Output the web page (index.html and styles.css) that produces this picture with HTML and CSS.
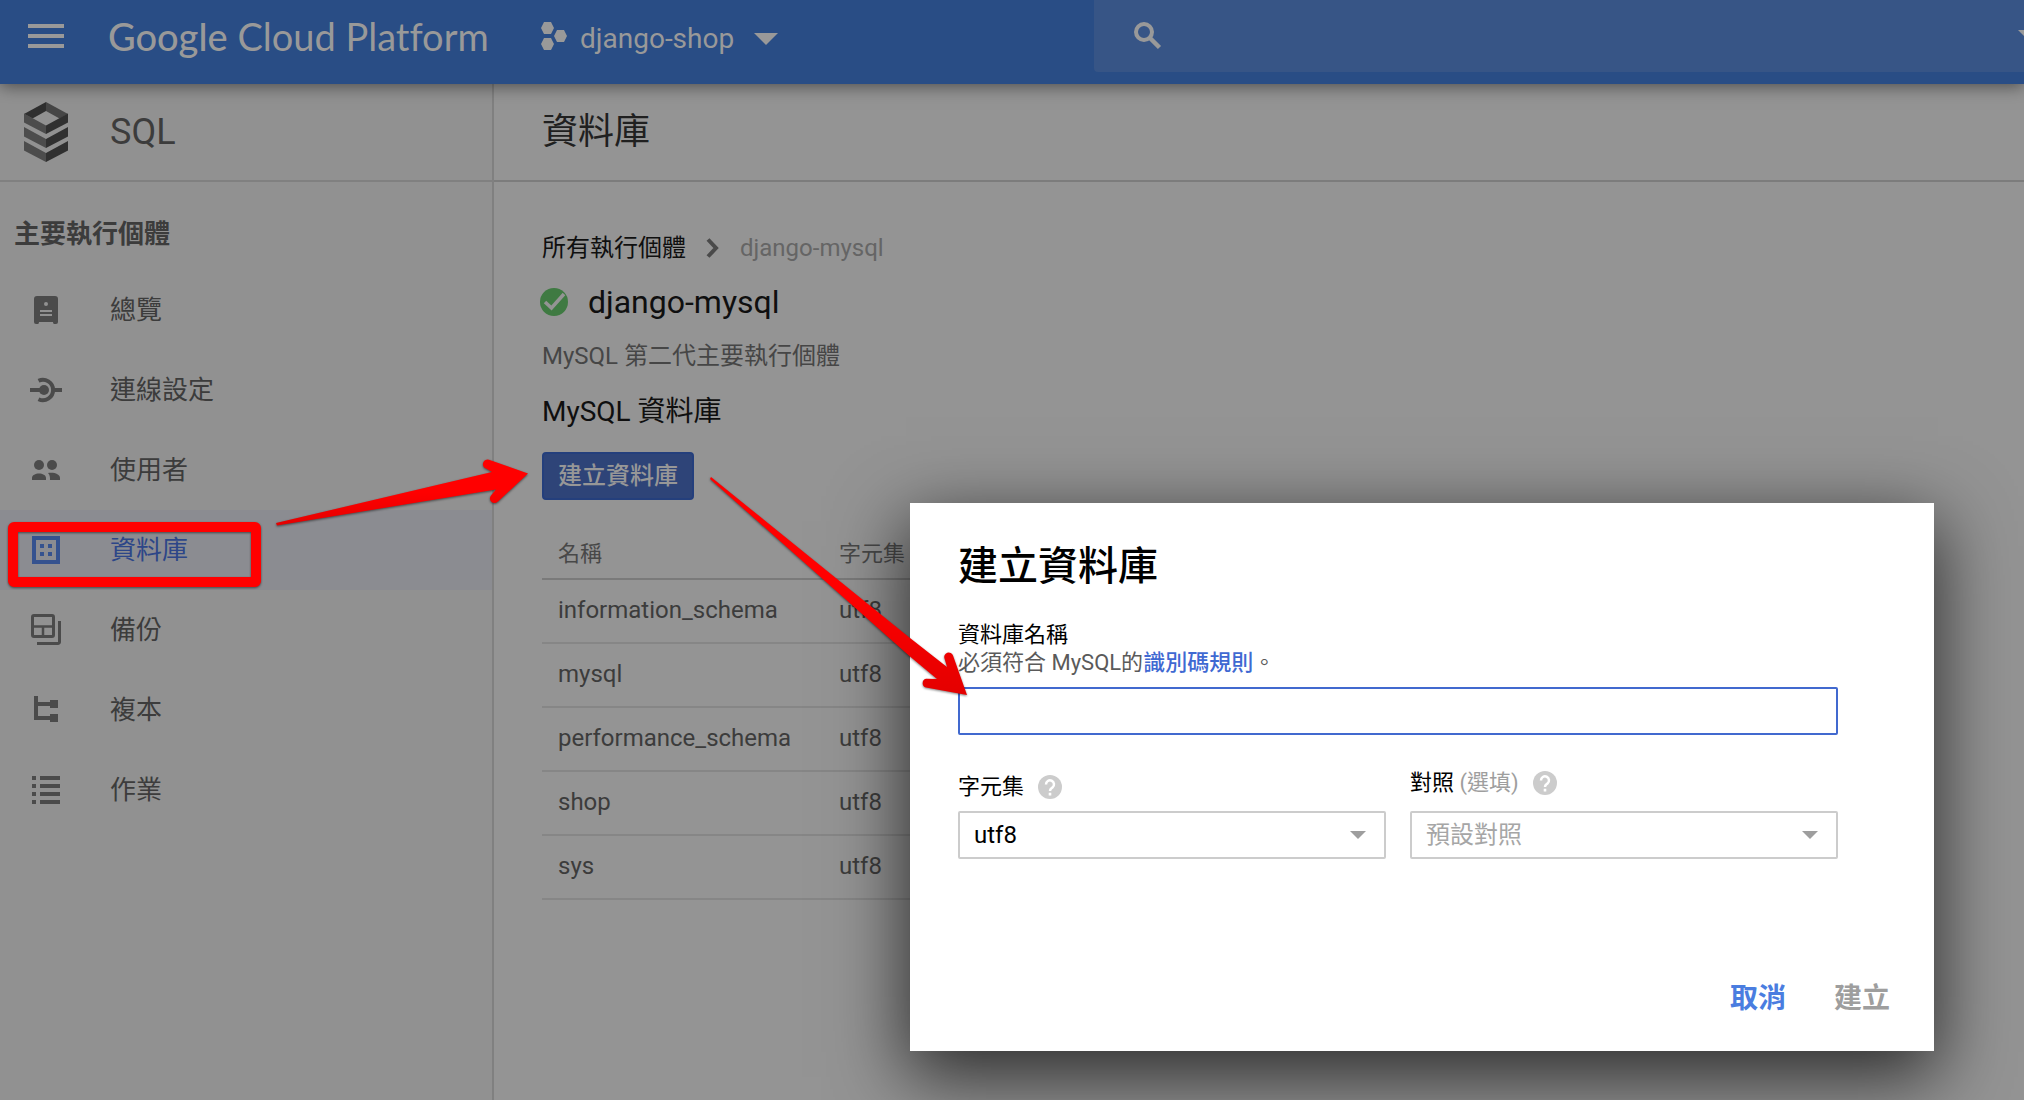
FILE: index.html
```html
<!DOCTYPE html>
<html lang="zh-Hant">
<head>
<meta charset="utf-8">
<meta name="viewport" content="width=device-width, initial-scale=1">
<title>資料庫 - SQL - Google Cloud Platform</title>
<link rel="stylesheet" href="styles.css">
</head>
<body>
<div class="page">
  <header class="topbar">
    <button class="icon-button menu-button" type="button" aria-label="選單">
      <svg width="36" height="24" viewBox="0 0 36 24" fill="currentColor"><path d="M0 0h36v4H0zM0 10h36v4H0zM0 20h36v4H0z"/></svg>
    </button>
    <a class="brand" href="#"><span class="brand-google">Google</span> Cloud Platform</a>
    <button class="icon-button project" type="button">
      <svg width="26" height="28" viewBox="0 0 26 28" fill="currentColor"><path d="M3 0h7l3 6-3 6H3L0 6zM16 8h7l3 6-3 6h-7l-3-6zM3 16h7l3 6-3 6H3l-3-6z"/></svg>
      <span class="project-name">django-shop</span>
      <svg class="project-caret" width="24" height="12" viewBox="0 0 24 12" fill="currentColor"><path d="M0 0h24L12 12z"/></svg>
    </button>
    <div class="search">
      <svg width="28" height="28" viewBox="0 0 28 28" fill="none" stroke="currentColor"><circle cx="10" cy="10" r="8" stroke-width="4"/><path d="M15.500 15.500l10 10" stroke-width="4.500"/></svg>
      <svg width="6" height="12" viewBox="0 0 6 12" fill="currentColor"><path d="M0 0h6v6z"/></svg>
    </div>
  </header>

  <div class="layout">
    <nav class="sidebar">
      <div class="product">
        <svg class="product-icon" width="44" height="60" viewBox="0 0 44 60">
          <path fill="#2f2f2f" d="M22 0v9L8.500 16.500 0 12z"/><path fill="#464646" d="M22 0v9l13.500 7.500L44 12z"/>
          <path fill="#4c4c4c" d="M0 11.500l22 12V32L0 20.500zM0 25l22 12v9L0 34.500zM0 39l22 12v9L0 48.500z"/>
          <path fill="#303030" d="M44 11.500l-22 12V32l22-11.500zM44 25L22 37v9l22-11.500zM44 39L22 51v9l22-11.500z"/>
        </svg>
        <span class="product-name">SQL</span>
      </div>
      <h2 class="sidebar-title">主要執行個體</h2>
      <ul class="menu">
        <li><a class="menu-item" href="#">
          <svg width="32" height="32" viewBox="0 0 32 32"><path fill="currentColor" fill-rule="evenodd" d="M7 2h18a3 3 0 0 1 3 3v23a2 2 0 0 1-2 2h-2a2 2 0 0 1-1-2H9a2 2 0 0 1-1 2H6a2 2 0 0 1-2-2V5a3 3 0 0 1 3-3zm9 6a2 2 0 1 0 0 4 2 2 0 0 0 0-4zm-6 8v2h12v-2zm0 4v2h12v-2z"/></svg>
          總覽</a></li>
        <li><a class="menu-item" href="#">
          <svg width="32" height="32" viewBox="0 0 32 32" fill="none" stroke="currentColor" stroke-width="4"><circle cx="14" cy="16" r="5" fill="currentColor" stroke="none"/><path d="M0 16h10M22 16h10"/><path d="M8.500 6.800a10.200 10.200 0 1 1 0 18.400"/></svg>
          連線設定</a></li>
        <li><a class="menu-item" href="#">
          <svg width="32" height="32" viewBox="0 0 32 32" fill="currentColor"><circle cx="9" cy="11" r="5"/><circle cx="22" cy="11" r="5"/><path d="M2 26v-2c0-6 14-6 14 0v2zM20 26c0-3 0-5-2-7 6-1 12 1 12 5v2z"/></svg>
          使用者</a></li>
        <li><a class="menu-item active" href="#" aria-current="page">
          <svg width="32" height="32" viewBox="0 0 32 32" fill="currentColor"><path fill-rule="evenodd" d="M2 2h28v28H2zM6 6v20h20V6z"/><path d="M10 10h4v4h-4zM18 10h4v4h-4zM10 18h4v4h-4zM18 18h4v4h-4z"/></svg>
          資料庫</a></li>
        <li><a class="menu-item" href="#">
          <svg width="32" height="32" viewBox="0 0 32 32" fill="none" stroke="currentColor" stroke-width="3"><rect x="2.500" y="1.500" width="21" height="21" rx="1.500"/><path d="M3 12.500h20M13 13v10" stroke-width="2.500"/><path d="M29.500 7v21a1.500 1.500 0 0 1-1.500 1.500H7"/></svg>
          備份</a></li>
        <li><a class="menu-item" href="#">
          <svg width="32" height="32" viewBox="0 0 32 32" fill="currentColor"><path d="M4 2h4v6h12V6h8v8h-8v-2H8v10h12v-2h8v8h-8v-2H4z"/></svg>
          複本</a></li>
        <li><a class="menu-item" href="#">
          <svg width="32" height="32" viewBox="0 0 32 32" fill="currentColor"><path d="M2 2h4v4H2zM10 2h20v4H10zM2 10h4v4H2zM10 10h20v4H10zM2 18h4v4H2zM10 18h20v4H10zM2 26h4v4H2zM10 26h20v4H10z"/></svg>
          作業</a></li>
      </ul>
    </nav>

    <main class="main">
      <div class="main-header"><h1 class="main-title">資料庫</h1></div>
      <div class="content">
        <nav class="breadcrumb">
          <a class="crumb" href="#">所有執行個體</a>
          <svg width="14" height="20" viewBox="0 0 14 20" fill="none" stroke="#4a4a4a" stroke-width="4"><path d="M2 1.500L10 10l-8 8.500"/></svg>
          <span class="crumb-current">django-mysql</span>
        </nav>
        <div class="instance">
          <svg width="28" height="28" viewBox="0 0 28 28"><circle cx="14" cy="14" r="14" fill="#3f7a42"/><path d="M5 14l6.500 6L24 6" fill="none" stroke="#949494" stroke-width="3.500"/></svg>
          <h2 class="instance-name">django-mysql</h2>
        </div>
        <p class="instance-type">MySQL 第二代主要執行個體</p>
        <h3 class="section-title">MySQL 資料庫</h3>
        <button class="create-button" type="button">建立資料庫</button>
        <table class="databases">
          <thead><tr><th class="name-column" scope="col">名稱</th><th scope="col">字元集</th></tr></thead>
          <tbody>
            <tr><td>information_schema</td><td>utf8</td></tr>
            <tr><td>mysql</td><td>utf8</td></tr>
            <tr><td>performance_schema</td><td>utf8</td></tr>
            <tr><td>shop</td><td>utf8</td></tr>
            <tr><td>sys</td><td>utf8</td></tr>
          </tbody>
        </table>
      </div>
    </main>
  </div>

  <dialog class="dialog" open aria-labelledby="dialog-title">
    <form class="dialog-form">
      <h2 class="dialog-title" id="dialog-title">建立資料庫</h2>
      <label class="label" for="db-name">資料庫名稱</label>
      <p class="hint">必須符合 MySQL的<a class="link" href="#">識別碼規則</a>。</p>
      <input class="text-input" id="db-name" type="text">
      <div class="fields">
        <div class="field">
          <div class="label-row">
            <label class="label" for="charset">字元集</label>
            <svg width="24" height="24" viewBox="0 0 24 24"><circle cx="12" cy="12" r="12" fill="#ccc"/><path d="M8 9.500a4 4 0 1 1 6.500 3C13 13.700 12 14 12 16" fill="none" stroke="#fff" stroke-width="2.500"/><path d="M10.700 17.800h2.600v2.600h-2.600z" fill="#fff"/></svg>
          </div>
          <div class="select-box">
            <select class="select" id="charset"><option>utf8</option></select>
            <svg class="select-caret" width="16" height="8" viewBox="0 0 16 8"><path fill="#9e9e9e" d="M0 0h16L8 8z"/></svg>
          </div>
        </div>
        <div class="field">
          <div class="label-row label-row-optional">
            <label class="label" for="collation">對照 <span class="optional">(選填)</span></label>
            <svg width="24" height="24" viewBox="0 0 24 24"><circle cx="12" cy="12" r="12" fill="#ccc"/><path d="M8 9.500a4 4 0 1 1 6.500 3C13 13.700 12 14 12 16" fill="none" stroke="#fff" stroke-width="2.500"/><path d="M10.700 17.800h2.600v2.600h-2.600z" fill="#fff"/></svg>
          </div>
          <div class="select-box">
            <select class="select placeholder" id="collation"><option>預設對照</option></select>
            <svg class="select-caret" width="16" height="8" viewBox="0 0 16 8"><path fill="#9e9e9e" d="M0 0h16L8 8z"/></svg>
          </div>
        </div>
      </div>
      <div class="actions">
        <button class="action cancel" type="button">取消</button>
        <button class="action submit" type="submit" disabled>建立</button>
      </div>
    </form>
  </dialog>

  <svg class="annotations" width="1000" height="720" viewBox="0 0 1000 720" aria-hidden="true">
    <defs>
      <linearGradient id="red" x1="0" y1="0" x2="0" y2="1"><stop offset=".5" stop-color="#f00"/><stop offset="1" stop-color="#e40000"/></linearGradient>
    </defs>
    <g class="marks">
      <rect x="13" y="527" width="243" height="55" rx="1" fill="none" stroke="#f00" stroke-width="10" stroke-linejoin="round"/>
      <path fill="url(#red)" d="M276 523L492 472 486 468.500A4.500 4.500 0 0 1 489 459.800L528 473.500 498 501.500A4.500 4.500 0 0 1 491 495.500L496 489.500 277 525.500z"/>
      <path fill="url(#red)" d="M711 477L910 638 947 667 944.500 658.500A4.500 4.500 0 0 1 953 655.500L967 695 926 687.500A4.500 4.500 0 0 1 926 678.800L937 679 910 656.500 710 479z"/>
    </g>
  </svg>
</div>
</body>
</html>
```
FILE: styles.css
```css
* { box-sizing: border-box; }

body {
  margin: 0;
  background: #949494;
  color: #3c3c3c;
  font-family: Roboto, "Noto Sans CJK TC", sans-serif;
  font-size: 24px;
  line-height: 32px;
}

h1, h2, h3, p, ul { margin: 0; padding: 0; font-weight: 400; }
ul { list-style: none; }
a { color: inherit; text-decoration: none; }
svg { display: block; flex: none; }
button, input, select { font: inherit; color: inherit; }

.page {
  position: relative;
  display: flex;
  flex-direction: column;
  min-height: 100vh;
  overflow: hidden;
}

/* Top bar */
.topbar {
  position: relative;
  z-index: 1;
  display: flex;
  align-items: flex-start;
  height: 84px;
  padding-left: 28px;
  background: #294d85;
  color: #999;
  box-shadow: 0 2px 16px rgba(0, 0, 0, .5);
}

.icon-button {
  display: flex;
  align-items: center;
  padding: 0;
  border: 0;
  background: none;
  height: 72px;
}

.menu-button { margin-right: 44px; }

.brand {
  width: 389px;
  font-family: Lato, sans-serif;
  font-size: 38px;
  font-variant-ligatures: none;
  line-height: 72px;
  white-space: nowrap;
}

.brand-google { font-weight: 500; }

.project { margin-left: 44px; gap: 20px; font-size: 28px; }
.project svg:first-child { margin-right: -7px; }
.project-name { line-height: 72px; padding-top: 6px; }
.project-caret { margin-top: 6px; }

.search {
  display: flex;
  flex: 1;
  align-items: center;
  justify-content: space-between;
  height: 72px;
  margin-left: 316px;
  padding-left: 40px;
  border-bottom-left-radius: 4px;
  background: #375586;
}

.layout { display: flex; flex: 1; }

/* Sidebar */
.sidebar {
  flex: none;
  width: 494px;
  background: #919191;
  border-right: 2px solid #808080;
}

.product {
  display: flex;
  align-items: center;
  gap: 42px;
  height: 98px;
  padding-left: 24px;
  border-bottom: 2px solid #808080;
}

.product-name { font-size: 36px; }

.sidebar-title {
  padding: 36px 14px 20px;
  font-size: 26px;
  font-weight: 700;
  line-height: 32px;
}

.menu-item {
  display: flex;
  align-items: center;
  gap: 48px;
  height: 80px;
  padding-left: 30px;
  font-size: 26px;
}

.menu-item svg { color: #4b4b4b; }
.menu-item.active { background: #8b8c91; color: #2d4688; }
.menu-item.active svg { color: #35528f; }

/* Main area */
.main { flex: 1; min-width: 0; }

.main-header {
  display: flex;
  align-items: center;
  height: 98px;
  padding-left: 48px;
  border-bottom: 2px solid #7c7c7c;
}

.main-title { font-size: 36px; line-height: 40px; color: #202020; }

.content { padding: 50px 48px; color: #0f0f0f; }

.breadcrumb { display: flex; align-items: center; gap: 20px; }
.crumb-current { color: #656565; }

.instance { display: flex; align-items: center; gap: 20px; height: 76px; margin-left: -2px; }
.instance-name { font-size: 32px; line-height: 40px; }
.instance-type { color: #464646; }
.section-title { margin: 24px 0; font-size: 28px; }

.create-button {
  display: block;
  height: 48px;
  padding: 0 14px;
  border: 2px solid #243f7c;
  border-radius: 4px;
  background: #2e4478;
  color: #979797;
  font-weight: 500;
}

.databases {
  width: 72%;
  margin-top: 24px;
  border-collapse: separate;
  border-spacing: 0;
  table-layout: fixed;
  color: #3c3c3c;
  text-align: left;
}

.databases th,
.databases td { height: 64px; padding: 0 16px; border-bottom: 2px solid #868686; }
.databases th { height: 56px; padding-top: 6px; border-color: #7a7a7a; color: #484848; font-size: 22px; font-weight: 400; }
.databases td { padding-bottom: 2px; }
.name-column { width: 281px; }

/* Dialog */
.dialog {
  position: absolute;
  z-index: 2;
  top: 503px;
  right: 90px;
  left: auto;
  width: 1024px;
  max-width: 90%;
  margin: 0;
  padding: 44px 48px 32px;
  border: 0;
  background: #fff;
  color: #000;
  box-shadow: 0 22px 70px 4px rgba(0, 0, 0, .7);
}

.dialog-title { margin-bottom: 34px; font-size: 40px; font-weight: 500; line-height: 40px; }
.label { font-size: 22px; line-height: 28px; }
.dialog-form > .label { display: block; }
.hint { font-size: 22px; line-height: 28px; color: #5a5a5a; }
.link { color: #3f69d2; font-weight: 500; }

.text-input {
  display: block;
  width: calc(100% - 48px);
  height: 48px;
  margin-top: 10px;
  padding: 0 14px;
  border: 2px solid #4169cf;
  border-radius: 2px;
  outline: 0;
  background: #fff;
}

.fields {
  display: grid;
  grid-template-columns: 1fr 1fr;
  align-items: end;
  gap: 24px;
  margin: 34px 48px 0 0;
}

.label-row { display: flex; align-items: center; gap: 14px; height: 28px; margin-bottom: 10px; }
.label-row-optional { margin-bottom: 14px; }
.optional { color: #9e9e9e; }
.select-box { position: relative; }

.select {
  display: block;
  width: 100%;
  height: 48px;
  padding: 0 14px;
  border: 2px solid #ccc;
  border-radius: 2px;
  background: #fff;
  appearance: none;
}

.select.placeholder { color: #a6a6a6; }
.select-caret { position: absolute; top: 20px; right: 20px; pointer-events: none; }

.actions { display: flex; justify-content: flex-end; gap: 48px; margin: 120px -4px 0 0; }

.action {
  padding: 0;
  border: 0;
  background: none;
  font-size: 28px;
  font-weight: 700;
  line-height: 40px;
}

.cancel { color: #4a7de0; }
.submit { color: #9e9e9e; }

/* Red callouts over the page */
.annotations { position: absolute; z-index: 3; top: 0; left: 0; pointer-events: none; }
.marks { filter: drop-shadow(0 1px 1px rgba(0, 0, 0, .5)); }
```
